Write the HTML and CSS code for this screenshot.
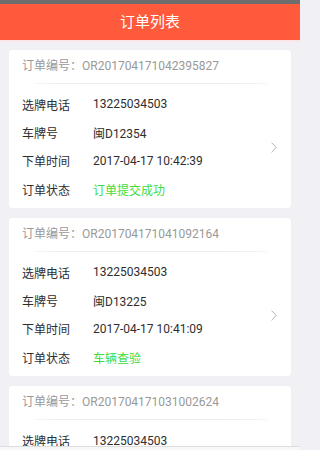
FILE: index.html
```html
<!DOCTYPE html>
<html lang="zh-CN">
<head>
<meta charset="utf-8">
<title>订单列表</title>
<link rel="stylesheet" href="styles.css">
</head>
<body>
<div class="page">
<div class="statusbar"></div>
<header class="navbar">订单列表</header>
<div class="navshadow"></div>
<main class="list">
  <section class="card">
    <div class="card-head">订单编号：OR201704171042395827</div>
    <div class="divider"></div>
    <div class="card-body">
      <div class="rows">
        <div class="row"><span class="label">选牌电话</span><span class="value">13225034503</span></div>
        <div class="row"><span class="label">车牌号</span><span class="value">闽D12354</span></div>
        <div class="row"><span class="label">下单时间</span><span class="value">2017-04-17 10:42:39</span></div>
        <div class="row"><span class="label">订单状态</span><span class="value status">订单提交成功</span></div>
      </div>
      <svg class="chev" width="6" height="11" viewBox="0 0 6 11"><path d="M0.6 0.6 L5.2 5.5 L0.6 10.4" fill="none" stroke="#b5b5b5" stroke-width="1"/></svg>
    </div>
  </section>
  <section class="card">
    <div class="card-head">订单编号：OR201704171041092164</div>
    <div class="divider"></div>
    <div class="card-body">
      <div class="rows">
        <div class="row"><span class="label">选牌电话</span><span class="value">13225034503</span></div>
        <div class="row"><span class="label">车牌号</span><span class="value">闽D13225</span></div>
        <div class="row"><span class="label">下单时间</span><span class="value">2017-04-17 10:41:09</span></div>
        <div class="row"><span class="label">订单状态</span><span class="value status">车辆查验</span></div>
      </div>
      <svg class="chev" width="6" height="11" viewBox="0 0 6 11"><path d="M0.6 0.6 L5.2 5.5 L0.6 10.4" fill="none" stroke="#b5b5b5" stroke-width="1"/></svg>
    </div>
  </section>
  <section class="card">
    <div class="card-head">订单编号：OR201704171031002624</div>
    <div class="divider"></div>
    <div class="card-body">
      <div class="rows">
        <div class="row"><span class="label">选牌电话</span><span class="value">13225034503</span></div>
        <div class="row"><span class="label">车牌号</span><span class="value">闽D13226</span></div>
        <div class="row"><span class="label">下单时间</span><span class="value">2017-04-17 10:31:00</span></div>
        <div class="row"><span class="label">订单状态</span><span class="value status">订单提交成功</span></div>
      </div>
      <svg class="chev" width="6" height="11" viewBox="0 0 6 11"><path d="M0.6 0.6 L5.2 5.5 L0.6 10.4" fill="none" stroke="#b5b5b5" stroke-width="1"/></svg>
    </div>
  </section>
</main>
<div class="tabbar"></div>
</div>
</body>
</html>
```
FILE: styles.css
```css
html, body {
  margin: 0;
  padding: 0;
}
body {
  background: #f1f1f5;
  font-family: Roboto, "Noto Sans CJK SC", sans-serif;
  color: #333;
  overflow: hidden;
}
.page {
  width: 300px;
  height: 450px;
  overflow: hidden;
  position: relative;
  background: #f1f1f5;
}
.statusbar {
  height: 4px;
  background: #6e6e6e;
}
.navbar {
  height: 36px;
  background: #fe5a3b;
  color: #fff;
  font-size: 15px;
  line-height: 36px;
  text-align: center;
}
.navshadow {
  height: 2px;
  background: #f9e6e6;
}
.list {
  padding: 8px 9px 0;
  display: flex;
  flex-direction: column;
  gap: 10px;
}
.card {
  background: #fff;
  border-radius: 3px;
  box-shadow: 0 0 1px rgba(0,0,0,0.06);
}
.card-head {
  height: 33px;
  line-height: 33px;
  padding-left: 13px;
  font-size: 12px;
  color: #999;
}
.divider {
  height: 1px;
  margin: 0 24px 0 26px;
  background: linear-gradient(to right, #f4f4f4, #ececec 20%, #ececec 80%, #f4f4f4);
}
.card-body {
  display: flex;
  align-items: center;
  padding: 6px 14px 5px 13px;
}
.rows {
  flex: 1;
  display: flex;
  flex-direction: column;
}
.row {
  height: 28.3px;
  display: flex;
  align-items: center;
  font-size: 12px;
}
.label {
  width: 71px;
  color: #2e2e2e;
}
.value {
  color: #2e2e2e;
}
.status {
  color: #3fdc3f;
}
.chev {
  display: block;
  margin-top: 1px;
}
.tabbar {
  position: absolute;
  left: 0;
  right: 0;
  bottom: 0;
  height: 3px;
  background: #f7f7f7;
  border-top: 1px solid #dedede;
}
```
